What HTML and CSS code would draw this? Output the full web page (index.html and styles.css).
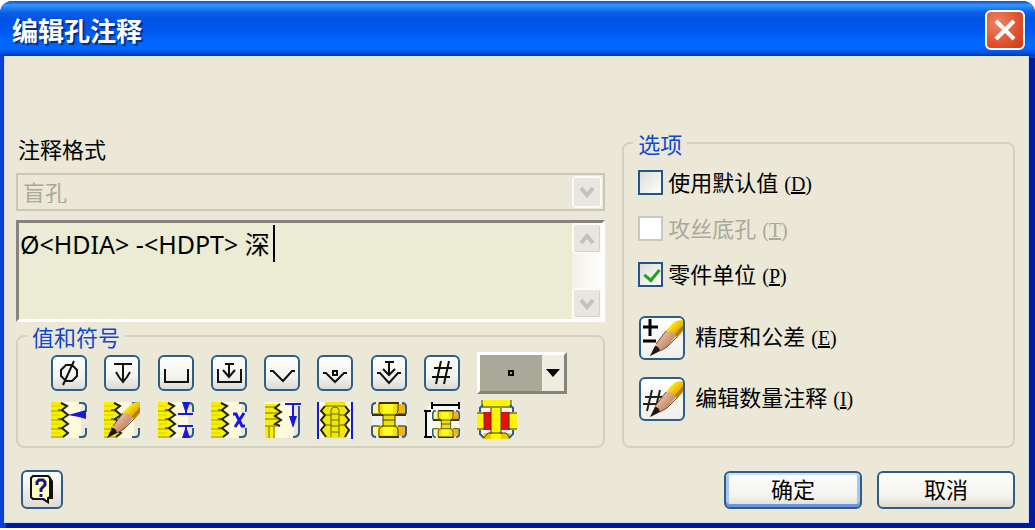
FILE: index.html
```html
<!DOCTYPE html>
<html lang="zh-CN">
<head>
  <meta charset="UTF-8">
  <meta name="viewport" content="width=device-width, initial-scale=1.0">
  <title>编辑孔注释</title>
  <link rel="stylesheet" href="styles.css">
</head>
<body>

  <!-- Shared drawings -->
  <svg class="defs" aria-hidden="true">
    <defs>
      <linearGradient id="wood" x1="0" y1="0" x2="1" y2="1">
        <stop offset="0.3" stop-color="#efc4a4"/>
        <stop offset="0.7" stop-color="#b87c5a"/>
      </linearGradient>
      <linearGradient id="paint" x1="0" y1="0" x2="1" y2="1">
        <stop offset="0.3" stop-color="#ffe800"/>
        <stop offset="0.8" stop-color="#e09000"/>
      </linearGradient>
    </defs>
    <symbol id="thread" viewBox="0 0 36 36">
      <rect x="1" width="29" height="36" fill="#fffadc"/>
      <path d="M28 1h3q4 0 4 4v5M35 26v5q0 4-4 4h-3" fill="none" stroke="#2f5d86" stroke-width="2"/>
      <path d="M0 0H11L16 4 12 8 17 13 12 17 17 22 12 26 17 31 13 36H0Z" fill="#f8f000"/>
      <path d="M0 9H12M0 18H12M0 27H12M0 35H12" stroke="#9c9800"/>
      <path d="M0 4H9M0 13H9M0 22H9M0 31H9" stroke="#d8d200"/>
      <path d="M10 1L16 4 11 8 17 13 11 17 17 22 11 26 17 31 12 35" fill="none" stroke="#222200" stroke-width="2"/>
      <path d="M7 8L12 8M7 17L12 17M7 26L12 26" fill="none" stroke="#222200"/>
    </symbol>
    <symbol id="pencil" viewBox="0 0 36 36">
      <path d="M3 36L9 24 24 5 34 10 20 27Z" fill="url(#wood)"/>
      <path d="M19 11L27 2Q30 0 36 0V11L30 18Q28 10 19 11Z" fill="url(#paint)"/>
      <path d="M30 17L36 10V5L28 14Z" fill="#b77b12"/>
      <path d="M3 36L8 26Q12 26 13 31Z" fill="#1b1712"/>
      <path d="M9 24L19 11M13 31L20 27 30 17" fill="none" stroke="#6d4a34"/>
    </symbol>
    <symbol id="bolt" viewBox="0 0 36 36">
      <path d="M2 2H34V13H24V23H34V34H2V23H12V13H2Z" fill="#f2e200"/>
      <path d="M27 2h7v11h-7zM27 24h7v10h-7z" fill="#f5b21c"/>
      <path d="M1 4v8h6V2H3zM1 25v6l3 3h3V25z" fill="#fff5a0"/>
      <path d="M12 2h10v9H12zM12 25h10v8H12z" fill="#fffa20"/>
      <path d="M8 1V9Q9 13 12 13H24Q27 12 27 8V1M1 12H8M27 12H35M8 35V28Q9 24 12 24H24Q27 25 27 28V35M1 24H9M27 24H35M12 13V24M24 13V24M12 18H24" fill="none" stroke="#3a3700"/>
      <path d="M1 13H12M24 13H35M8 35H28M8 1H28" fill="none" stroke="#3a3700" stroke-width="2"/>
      <path d="M1 12V5Q1 1 5 1M1 24V31Q1 35 5 35M35 12V5Q35 1 31 1M35 24V31Q35 35 31 35" fill="none" stroke="#2f5d86" stroke-width="2"/>
    </symbol>
  </svg>

  <div class="window">
    <header class="titlebar">
      <h1>编辑孔注释</h1>
      <button class="close" type="button" aria-label="关闭">
        <svg width="22" height="22" viewBox="0 0 22 22"><path d="M2 2L20 20M20 2L2 20" stroke="#fff" stroke-width="4"/></svg>
      </button>
    </header>

    <main class="content">
      <div class="columns">

        <!-- Left column: format and symbols -->
        <div class="format">
          <label class="format-label" for="format">注释格式</label>
          <div class="select-box">
            <select id="format" disabled>
              <option>盲孔</option>
            </select>
            <span class="select-arrow">
              <svg width="16" height="12" viewBox="0 0 16 12"><path d="M2 2l6 7 6-7" fill="none" stroke="#c3c2b6" stroke-width="4"/></svg>
            </span>
          </div>

          <div class="note">
            <textarea aria-label="注释" spellcheck="false">Ø&lt;HDIA&gt; -&lt;HDPT&gt; 深</textarea>
            <span class="caret"></span>
            <div class="scrollbar">
              <button type="button" aria-label="向上" disabled>
                <svg width="16" height="12" viewBox="0 0 16 12"><path d="M2 10l6-7 6 7" fill="none" stroke="#c3c2b6" stroke-width="4"/></svg>
              </button>
              <button type="button" aria-label="向下" disabled>
                <svg width="16" height="12" viewBox="0 0 16 12"><path d="M2 2l6 7 6-7" fill="none" stroke="#c3c2b6" stroke-width="4"/></svg>
              </button>
            </div>
          </div>

          <fieldset class="group">
            <legend>值和符号</legend>
            <div class="symbols">
              <button class="tool" type="button" aria-label="直径">
                <svg viewBox="0 0 36 36"><path d="M15 10h6l5 5v6l-5 5h-6l-5-5v-6zM23 6L12 30" /></svg>
              </button>
              <button class="tool" type="button" aria-label="深度">
                <svg viewBox="0 0 36 36"><path d="M10 9H28M19 9V27M12 17l3 5 4 5 4-5 3-5"/></svg>
              </button>
              <button class="tool" type="button" aria-label="沉头平底孔">
                <svg viewBox="0 0 36 36"><path d="M7 14V27H30V14"/></svg>
              </button>
              <button class="tool" type="button" aria-label="沉头平底孔深度">
                <svg viewBox="0 0 36 36"><path d="M7 14V27H30V14M14 9H23M18 9V22M12 15l6 7 6-7"/></svg>
              </button>
              <button class="tool" type="button" aria-label="倒角孔">
                <svg viewBox="0 0 36 36"><path d="M6 16h3l10 10 9-10h3"/></svg>
              </button>
              <button class="tool" type="button" aria-label="倒角孔直径">
                <svg viewBox="0 0 36 36"><path d="M6 18h3l9 9 9-9h3M16 16h4v4h-4z"/></svg>
              </button>
              <button class="tool" type="button" aria-label="倒角孔深度">
                <svg viewBox="0 0 36 36"><path d="M14 7h9M18 7v13M12 14l6 6 6-6M6 18h3l9 10 9-10h3"/></svg>
              </button>
              <button class="tool" type="button" aria-label="数量">
                <svg viewBox="0 0 36 36"><path d="M17 6L12 29M25 6L20 29M10 13H28M8 22H26"/></svg>
              </button>
              <button class="dropdown" type="button" aria-label="符号">
                <span class="dropdown-value"><svg width="6" height="6" viewBox="0 0 6 6"><path d="M1 1h4v4H1z" fill="#aaa898" stroke="#000" stroke-width="2"/></svg></span>
                <span class="dropdown-arrow"><svg width="14" height="8" viewBox="0 0 14 8"><path d="M0 0H14L7 8Z"/></svg></span>
              </button>

              <button class="thread" type="button" aria-label="螺纹标识">
                <svg viewBox="0 0 36 36"><use href="#thread"/><path d="M17 13L28 10 35 8V17L28 15Z" fill="#1717e6"/></svg>
              </button>
              <button class="thread" type="button" aria-label="自定义螺纹标识">
                <svg viewBox="0 0 36 36"><use href="#thread"/><use href="#pencil"/></svg>
              </button>
              <button class="thread" type="button" aria-label="螺距">
                <svg viewBox="0 0 36 36"><use href="#thread"/><path d="M20 12H35M20 24H35M28 0V12M28 24V36" stroke="#1717e6" stroke-width="2"/><path d="M24 0h8l-4 12zM24 36h8l-4-12z" fill="#1717e6"/></svg>
              </button>
              <button class="thread" type="button" aria-label="螺纹等级">
                <svg viewBox="0 0 36 36"><use href="#thread"/><path d="M22 12h3l6 12h3M33 11L24 25" fill="none" stroke="#1717e6" stroke-width="3"/></svg>
              </button>
              <button class="thread" type="button" aria-label="螺纹深度">
                <svg viewBox="0 0 36 36">
                  <rect x="1" width="29" height="36" fill="#fffadc"/>
                  <path d="M35 4v26q0 5-6 5" fill="none" stroke="#2f5d86" stroke-width="2"/>
                  <path d="M1 2H16L12 6 17 10 12 14 17 18 12 21 16 23H11V36H1Z" fill="#f8f000"/>
                  <path d="M16 2L11 6 17 10 11 14 17 18 11 22 16 24" fill="none" stroke="#222200" stroke-width="2"/>
                  <path d="M1 5H11M1 11H14M1 17H14M1 24H14M10 24V36M5 24V36" stroke="#75720a"/>
                  <path d="M21 2H37M29 2V24" stroke="#1717e6" stroke-width="2"/>
                  <path d="M25 14h8l-4 12z" fill="#1717e6"/>
                </svg>
              </button>
              <button class="thread" type="button" aria-label="螺纹孔">
                <svg viewBox="0 0 36 36">
                  <path d="M2 0H34V36H2Z" fill="#fffadc"/>
                  <path d="M8 0H28V5L32 9 29 14 32 18 29 23 32 28 28 36H9L5 29 8 24 5 18 8 13 5 9 8 5Z" fill="#f2e800"/>
                  <path d="M8 4L4 9 8 13 4 18 8 23 4 28 9 35M28 4L32 9 28 13 32 18 28 23 32 28 28 35" fill="none" stroke="#222200" stroke-width="2"/>
                  <path d="M14 35V8Q15 5 18 5 21 5 22 8V35M14 12H22M14 18H22M14 24H22M14 30H22M8 13H14M8 23H14M22 13H29M22 23H29M8 4H28" fill="none" stroke="#66620a"/>
                  <path d="M1 0V37M35 0V37" stroke="#1717e6" stroke-width="2"/>
                </svg>
              </button>
              <button class="thread" type="button" aria-label="紧固件">
                <svg viewBox="0 0 36 36"><rect y="12" x="1" width="34" height="12" fill="#eef1f4"/><use href="#bolt"/></svg>
              </button>
              <button class="thread" type="button" aria-label="紧固件配合">
                <svg viewBox="0 0 36 36">
                  <path d="M8 2Q3 3 2 9V36H35V2Z" fill="#f8f8f4"/>
                  <use href="#bolt" x="8" y="8" width="28" height="28"/>
                  <path d="M8 3H35M8 0V7M35 0V7M2 9V35M0 9H7M0 35H8" stroke="#000" stroke-width="2"/>
                </svg>
              </button>
              <button class="thread" type="button" aria-label="贯穿">
                <svg class="wide" viewBox="0 0 40 40">
                  <path d="M4 1h32v11H4zM4 29h32v8H4z" fill="#f4f5f5"/>
                  <path d="M5 0h29v8H5z" fill="#fff500"/>
                  <path d="M7 39v-6h26v6z" fill="#ecc800"/>
                  <path d="M7 12h26v18H7z" fill="#f00c0c"/>
                  <path d="M0 13h6v16H0zM14 8h10v31H14zM32 13h8v16h-8z" fill="#fff500"/>
                  <path d="M5 0v7h29V0M14 8V34M24 8V34M7 12v18M32 12v18M0 13h7M0 29h7M32 13h8M32 29h8M7 38l4-5h18l4 5" fill="none" stroke="#3a3700"/>
                  <path d="M3 12V8L6 5M36 12V8L33 5M3 30v4l4 4M36 30v4l-4 4" fill="none" stroke="#2f5d86" stroke-width="2"/>
                </svg>
              </button>
            </div>
          </fieldset>
        </div>

        <!-- Right column: options -->
        <fieldset class="group options">
          <legend>选项</legend>
          <label class="check"><input type="checkbox"><span>使用默认值<span class="key">(<u>D</u>)</span></span></label>
          <label class="check disabled"><input type="checkbox" disabled><span>攻丝底孔<span class="key">(<u>T</u>)</span></span></label>
          <label class="check"><input type="checkbox" checked><span>零件单位<span class="key">(<u>P</u>)</span></span></label>

          <div class="actions">
            <div class="action">
              <button class="edit" id="precision" type="button" aria-labelledby="precision-label">
                <svg viewBox="0 0 42 40"><path d="M9 1V18M2 9H17M2 23H15" stroke="#000" stroke-width="3"/><use href="#pencil" x="6" y="2" width="36" height="36"/></svg>
              </button>
              <label id="precision-label" for="precision">精度和公差<span class="key">(<u>E</u>)</span></label>
            </div>
            <div class="action">
              <button class="edit" id="quantity" type="button" aria-labelledby="quantity-label">
                <svg viewBox="0 0 42 40"><path d="M11 11L6 32M19 11L14 32M4 18H22M2 25H20" stroke="#222" stroke-width="2"/><use href="#pencil" x="6" y="2" width="36" height="36"/></svg>
              </button>
              <label id="quantity-label" for="quantity">编辑数量注释<span class="key">(<u>I</u>)</span></label>
            </div>
          </div>
        </fieldset>
      </div>

      <footer class="footer">
        <button class="help" type="button" aria-label="帮助">
          <svg width="28" height="30" viewBox="0 0 28 30">
            <path d="M5 3H23L25 6V24H21V29L15 25H5L2 22V3Z" fill="#111"/>
            <path d="M4 3H21V23H19V26L16 23H4Z" fill="#ffffc4"/>
            <path d="M3 3L5 1H20L22 3V22L20 23V27L15 24H5L3 22Z" fill="none" stroke="#111" stroke-width="2"/>
            <path d="M9 10V7L11 5H15L17 7V10L13 14V17M13 19V22" fill="none" stroke="#15158a" stroke-width="3"/>
          </svg>
        </button>
        <button class="btn btn-default" type="button">确定</button>
        <button class="btn" type="button">取消</button>
      </footer>
    </main>
  </div>

</body>
</html>
```

FILE: styles.css
```css
* {
  box-sizing: border-box;
}

body {
  margin: 0;
  background-color: #fff;
  color: #000;
  font-family: "Noto Sans CJK SC", sans-serif;
  font-size: 22px;
  line-height: 24px;
}

button,
select,
textarea {
  margin: 0;
  padding: 0;
  color: inherit;
  font: inherit;
}

svg {
  display: block;
}

.defs {
  position: absolute;
  width: 0;
  height: 0;
}

.window {
  margin-top: 1px;
  border-radius: 12px 12px 0 0;
  overflow: hidden;
  background-color: #0a3fd8;
}

/* Title bar */
.titlebar {
  display: flex;
  align-items: center;
  justify-content: space-between;
  height: 55px;
  padding: 4px 10px 2px 12px;
  background: linear-gradient(#0a50c8 0, #3a94ff 4px, #2080f8 7px, #0a5ce4 12px, #0054e3 18px, #0058ee 30px, #0068ff 42px, #0066ff 48px, #0046d0 53px, #0038b8 55px);
}

.titlebar h1 {
  margin: 0;
  color: #fff;
  font-size: 26px;
  line-height: 32px;
  text-shadow: 2px 2px 1px #0a2a80;
}

.close {
  display: flex;
  align-items: center;
  justify-content: center;
  width: 40px;
  height: 40px;
  border: 2px solid #fff;
  border-radius: 6px;
  background: radial-gradient(circle at 30% 30%, #ec8468, #e0502e 60%, #c83c10);
}

.content {
  margin: 0 6px 5px 4px;
  padding: 75px 13px 13px 11px;
  border: 1px solid #cfdcf4;
  border-top: 0;
  background-color: #ebe8d8;
  box-shadow: 4px 4px 0 2px #001a9c;
}

.columns {
  display: grid;
  grid-template-columns: 3fr 2fr;
  gap: 17px;
}

/* Format */
.format {
  display: flex;
  flex-direction: column;
  padding-top: 5px;
}

.format-label {
  margin: 0 0 13px 2px;
}

.select-box {
  position: relative;
  height: 38px;
  margin-bottom: 9px;
}

.select-box select {
  width: 100%;
  height: 100%;
  padding: 0 0 2px 5px;
  appearance: none;
  border: 2px solid #c9c7ba;
  border-radius: 0;
  background-color: #ebe8d8;
  color: #aaa898;
  opacity: 1;
}

.select-arrow {
  position: absolute;
  top: 3px;
  right: 3px;
  display: flex;
  align-items: center;
  justify-content: center;
  width: 30px;
  height: 32px;
  border: 2px solid #fbfaf5;
  border-radius: 4px;
  background-color: #e8e7df;
}

.note {
  position: relative;
  display: flex;
  height: 102px;
  margin-bottom: 2px;
  border: 3px solid #fff;
  border-top-color: #85837a;
  border-left-color: #85837a;
  background-color: #ecebd4;
}

.note textarea {
  flex: 1;
  padding: 3px 1px;
  border: 0;
  outline: 0;
  resize: none;
  overflow: hidden;
  background: transparent;
  font-family: "Noto Sans", "Noto Sans CJK SC", sans-serif;
  font-size: 25px;
  line-height: 36px;
}

.caret {
  position: absolute;
  top: 2px;
  left: 254px;
  width: 2px;
  height: 37px;
  background-color: #000;
}

.scrollbar {
  display: flex;
  flex-direction: column;
  justify-content: space-between;
  width: 30px;
  background: linear-gradient(to right, #f2f1e6, #fff);
}

.scrollbar button {
  display: flex;
  align-items: center;
  justify-content: center;
  height: 31px;
  border: 2px solid #fbfaf5;
  border-radius: 4px;
  background-color: #e8e7df;
  box-shadow: inset -1px -1px 0 #d3d2c8;
}

/* Groups */
.group {
  min-width: 0;
  margin: 0;
  padding: 0;
  border: 2px solid #d4d1c1;
  border-radius: 8px;
}

.group legend {
  margin-left: 9px;
  padding: 0 5px;
  color: #1148cc;
}

.symbols {
  display: grid;
  grid-template-columns: repeat(8, 1fr) 90px;
  grid-template-rows: 42px 40px;
  align-items: center;
  row-gap: 6px;
  padding: 4px 36px 6px 33px;
}

.tool {
  width: 36px;
  height: 36px;
  border: 2px solid #2f5d86;
  border-radius: 6px;
  background: linear-gradient(#fff, #f4f3f0 60%, #dcdad6);
}

.tool svg {
  width: 36px;
  height: 36px;
  margin: -2px;
  fill: none;
  stroke: #111;
  stroke-width: 2;
}

.thread {
  width: 36px;
  border: 0;
  background: none;
}

.thread svg {
  width: 36px;
  height: 36px;
  overflow: visible;
}

.thread .wide {
  width: 40px;
  height: 40px;
}

.dropdown {
  display: flex;
  height: 42px;
  border: 3px solid #fff;
  border-right-color: #85837a;
  border-bottom-color: #85837a;
  background-color: #efede0;
}

.dropdown-value,
.dropdown-arrow {
  display: flex;
  align-items: center;
  justify-content: center;
  height: 100%;
}

.dropdown-value {
  flex: 1;
  background-color: #aaa898;
}

.dropdown-arrow {
  width: 22px;
}

/* Options */
.check {
  display: flex;
  align-items: center;
  gap: 5px;
  height: 46px;
  margin-left: 14px;
}

.options .check:first-of-type {
  margin-top: 4px;
}

.check input {
  width: 25px;
  height: 25px;
  margin: 0;
  appearance: none;
  border: 2px solid #245585;
  background: linear-gradient(135deg, #dcdcd7, #fff);
}

.check input:checked::after {
  content: "";
  display: block;
  width: 7px;
  height: 12px;
  margin: 2px 0 0 7px;
  border: solid #21a121;
  border-width: 0 3px 3px 0;
  transform: rotate(40deg);
}

.check.disabled {
  color: #aaa898;
}

.check.disabled input {
  border-color: #cac8bb;
  background: #fff;
}

.key {
  margin-left: 6px;
  font-family: "Liberation Serif", serif;
  font-size: 20px;
}

.actions {
  display: grid;
  gap: 17px;
  margin: 19px 0 24px 15px;
}

.action {
  display: flex;
  align-items: center;
  gap: 10px;
}

.action label {
  padding-bottom: 4px;
}

.edit {
  width: 46px;
  height: 44px;
  border: 2px solid #2f5d86;
  border-radius: 6px;
  background: linear-gradient(#fff, #f0efec);
}

.edit svg {
  width: 42px;
  height: 40px;
}

/* Bottom buttons */
.footer {
  display: flex;
  align-items: center;
  gap: 15px;
  margin-top: 22px;
  padding-left: 5px;
}

.help {
  display: flex;
  align-items: center;
  justify-content: center;
  width: 42px;
  height: 39px;
  margin-right: auto;
  border: 2px solid #2f5d86;
  border-radius: 6px;
  background: linear-gradient(#fff, #dedcd4);
}

.btn {
  width: 138px;
  height: 38px;
  padding-bottom: 4px;
  border: 2px solid #2f5d86;
  border-radius: 6px;
  background: linear-gradient(#fff, #f3f2ec 70%, #dddacb);
}

.btn-default {
  box-shadow: inset 0 2px 0 #cfe0fc, inset 0 -3px 0 #6d93dd, inset 3px 0 0 #a9c5f5, inset -3px 0 0 #a9c5f5;
}
```
